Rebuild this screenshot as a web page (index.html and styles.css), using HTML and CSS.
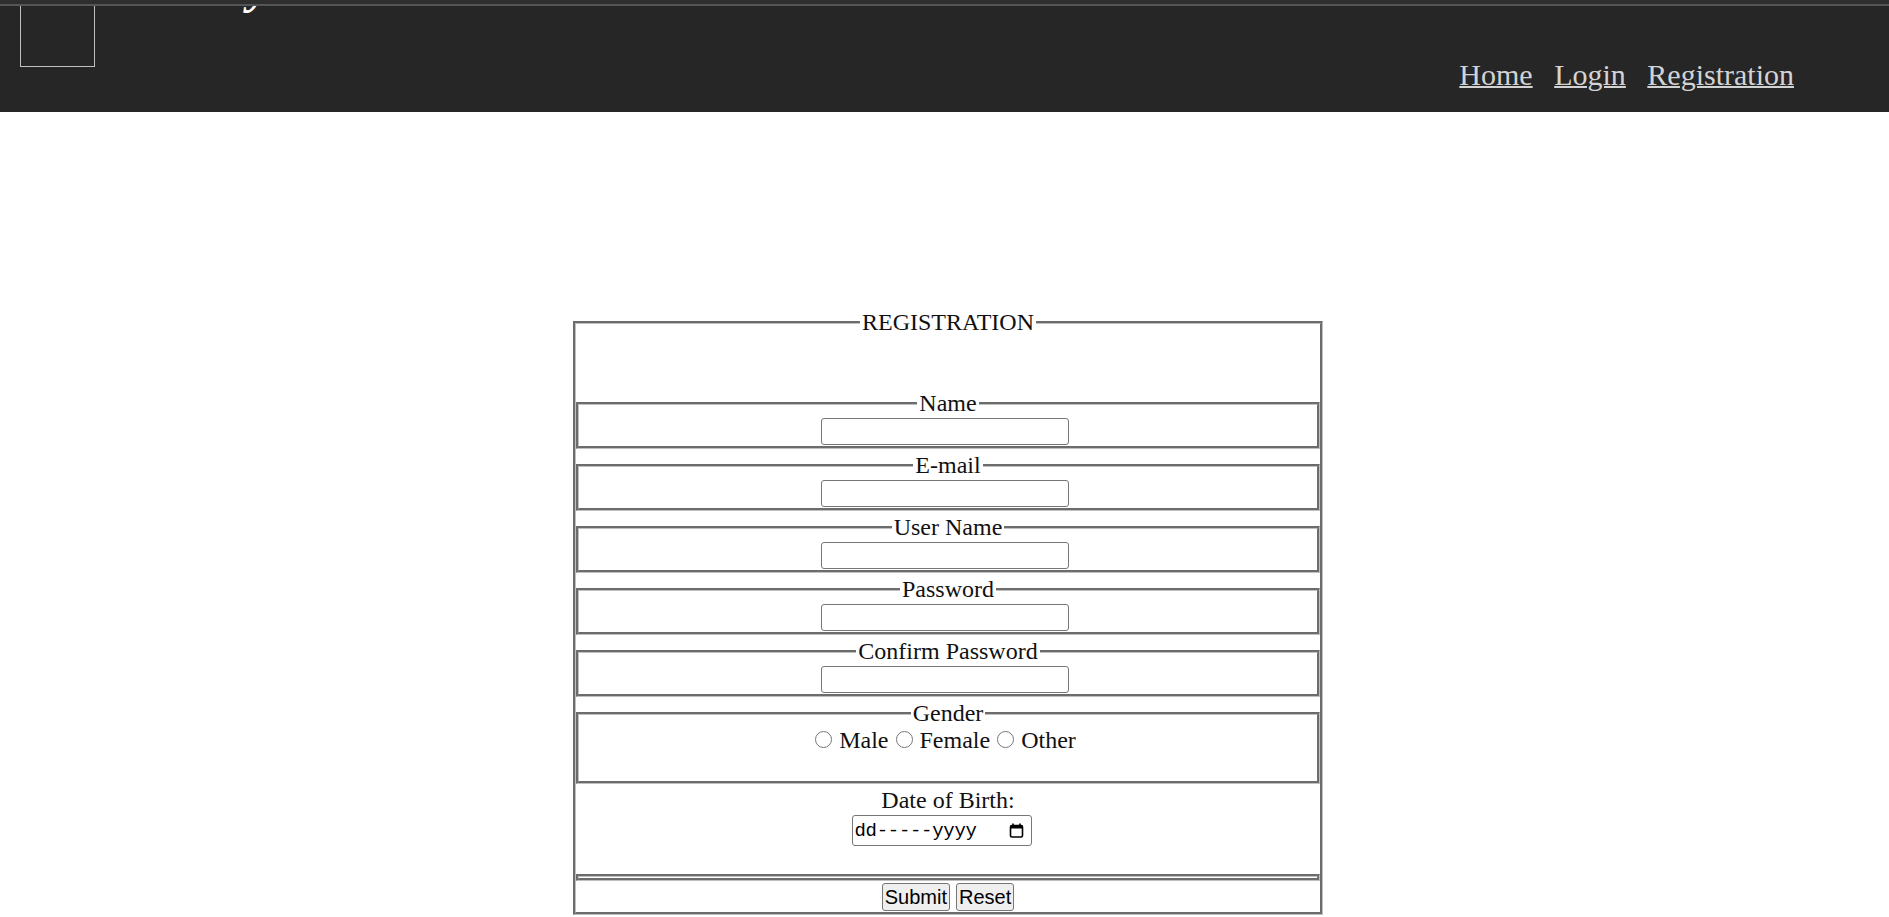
FILE: index.html
```html
<!DOCTYPE html>
<html lang="en">
<head>
<meta charset="utf-8">
<title>Registration</title>
<link rel="stylesheet" href="styles.css">
</head>
<body>
<div class="topstrip"></div>
<header class="header">
  <div class="logo"></div>
  <h1 class="title">Library</h1>
  <nav class="nav">
    <a href="#">Home</a>
    <a href="#">Login</a>
    <a href="#">Registration</a>
  </nav>
</header>
<main class="main">
  <form class="reg">
    <fieldset class="outer">
      <legend>REGISTRATION</legend>
      <div class="spacer"></div>
      <fieldset class="field"><legend>Name</legend><div class="row"><input type="text" class="txt"></div></fieldset>
      <fieldset class="field"><legend>E-mail</legend><div class="row"><input type="text" class="txt"></div></fieldset>
      <fieldset class="field"><legend>User Name</legend><div class="row"><input type="text" class="txt"></div></fieldset>
      <fieldset class="field"><legend>Password</legend><div class="row"><input type="password" class="txt"></div></fieldset>
      <fieldset class="field"><legend>Confirm Password</legend><div class="row"><input type="password" class="txt"></div></fieldset>
      <fieldset class="field"><legend>Gender</legend>
        <div class="radios"><input type="radio" name="g" class="rad"> Male <input type="radio" name="g" class="rad"> Female <input type="radio" name="g" class="rad"> Other</div>
        <div class="blank"></div>
      </fieldset>
      <div class="dob">
        <div class="dob-label">Date of Birth:</div>
        <div class="date-row">
          <div class="date"><span class="date-text">dd-----yyyy</span>
            <svg class="cal" width="15" height="15" viewBox="0 0 15 15"><path d="M4 0.5v2.5M11 0.5v2.5" stroke="#000" stroke-width="1.6"/><rect x="1.5" y="2.5" width="12" height="11.5" rx="1.5" fill="none" stroke="#000" stroke-width="1.6"/><rect x="1.5" y="2.5" width="12" height="3" fill="#000"/></svg>
          </div>
        </div>
        <div class="blank2"></div>
      </div>
      <fieldset class="field empty"></fieldset>
      <div class="buttons"><button type="submit" class="btn">Submit</button><button type="reset" class="btn">Reset</button></div>
    </fieldset>
  </form>
</main>
</body>
</html>
```
FILE: styles.css
```css
html, body {
  margin: 0;
  padding: 0;
  background: #fff;
}
body {
  font-family: "Liberation Serif", "Times New Roman", serif;
  color: #111;
}
.topstrip {
  height: 4px;
  background: #2e2e2e;
  border-bottom: 2px solid #555;
}
.header {
  height: 106px;
  background: #262626;
  display: flex;
  align-items: flex-start;
  overflow: hidden;
}
.logo {
  box-sizing: border-box;
  flex: none;
  width: 75px;
  height: 75px;
  margin: -14px 0 0 20px;
  border: 1px solid #c0c0c0;
}
.title {
  margin: -47px 0 0 25px;
  font: italic bold 48px/55px "Liberation Serif", serif;
  color: #fff;
  white-space: nowrap;
}
.nav {
  margin: 52px 95px 0 auto;
  display: flex;
  gap: 21.5px;
  font: 30px/34px "Liberation Serif", serif;
}
.nav a {
  color: #d3d3d3;
  text-decoration: underline;
  text-decoration-thickness: 2px;
}
.main {
  display: flex;
  justify-content: center;
  padding: 197px 0 0 7px;
}
.reg {
  margin: 0;
}
fieldset {
  margin: 0;
  padding: 0;
  border: 3px groove #c0c0c0;
  min-inline-size: 0;
}
legend {
  margin: 0 auto;
  padding: 0 2px;
  font: 24px/27px "Liberation Serif", serif;
}
.outer {
  box-sizing: border-box;
  width: 750px;
  font: 24px/27px "Liberation Serif", serif;
}
.spacer {
  height: 54px;
}
.field {
  margin: 0 0 3px;
}
.row {
  display: flex;
  justify-content: center;
  padding: 1px 0;
}
.txt {
  box-sizing: border-box;
  width: 248px;
  height: 27px;
  margin: 0 7px 0 0;
  border: 1px solid #767676;
  border-radius: 3px;
  background: #fff;
  padding: 0 3px;
}
.radios {
  height: 27px;
  line-height: 27px;
  text-align: center;
  white-space: nowrap;
  padding-right: 6px;
}
.rad {
  width: 17px;
  height: 17px;
  margin: 0 1px;
  vertical-align: baseline;
}
.blank {
  height: 27px;
}
.dob {
  text-align: center;
}
.dob-label {
  height: 27px;
  line-height: 27px;
}
.date-row {
  display: flex;
  justify-content: center;
  padding-top: 1px;
}
.date {
  box-sizing: border-box;
  width: 180px;
  height: 31px;
  margin-right: 13px;
  border: 1px solid #767676;
  border-radius: 3px;
  display: flex;
  align-items: center;
  padding: 2px 7px 0 2px;
  background: #fff;
}
.date-text {
  font: 19px/21px "Liberation Mono", monospace;
  color: #000;
  letter-spacing: -0.3px;
}
.cal {
  margin-left: auto;
  margin-top: -2px;
}
.blank2 {
  height: 28px;
}
.empty {
  box-sizing: border-box;
  height: 7px;
  margin-bottom: 2px;
}
.buttons {
  height: 29px;
  display: flex;
  justify-content: center;
  align-items: flex-start;
  gap: 6px;
}
.btn {
  box-sizing: border-box;
  height: 28px;
  margin: 0;
  padding: 0 2px;
  font: 20px/24px "Liberation Sans", Arial, sans-serif;
  color: #000;
  background: #efefef;
  border: 1px solid #767676;
  border-radius: 3px;
}
```
